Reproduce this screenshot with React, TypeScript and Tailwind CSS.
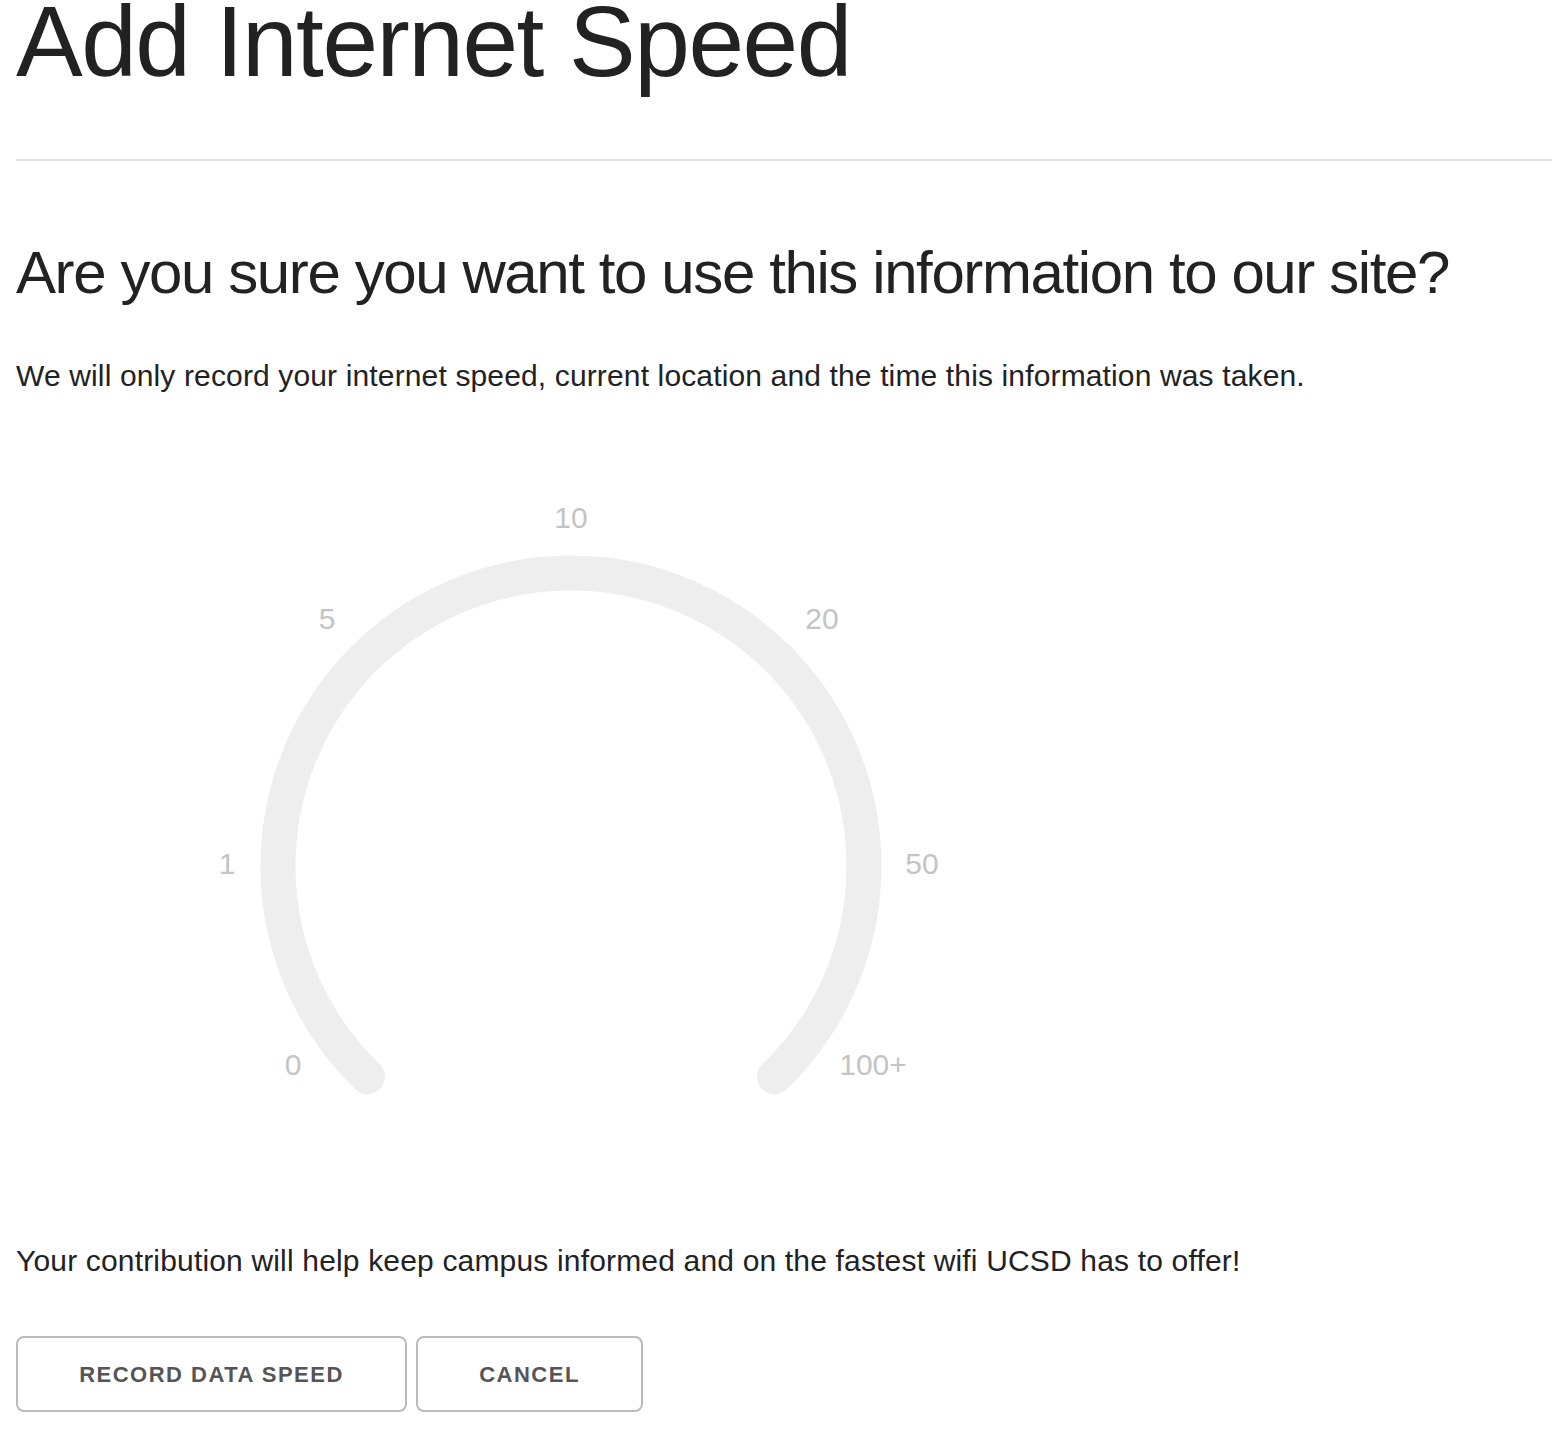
import React from 'react';

const labels: { text: string; x: number; y: number }[] = [
  { text: '0', x: 293, y: 1075 },
  { text: '1', x: 227, y: 874 },
  { text: '5', x: 327, y: 629 },
  { text: '10', x: 571, y: 528 },
  { text: '20', x: 822, y: 629 },
  { text: '50', x: 922, y: 874 },
  { text: '100+', x: 873, y: 1075 },
];

const SpeedGauge: React.FC = () => {
  // arc centre (571, 866), radius 293, sweeping a bit over 270deg
  const cx = 571;
  const cy = 866;
  const r = 293;
  const a = (46 * Math.PI) / 180;
  const dx = r * Math.cos(a);
  const dy = r * Math.sin(a);
  const arc = `M ${cx - dx} ${cy + dy} A ${r} ${r} 0 1 1 ${cx + dx} ${cy + dy}`;

  return (
    <svg width="960" height="837" viewBox="16 400 960 837" className="block">
      <path d={arc} fill="none" stroke="#eeeeee" strokeWidth="35" strokeLinecap="round" />
      {labels.map(l => (
        <text
          key={l.text}
          x={l.x}
          y={l.y}
          textAnchor="middle"
          fill="#c4c4c4"
          fontSize="30"
          fontFamily="'Liberation Sans', Arial, sans-serif"
        >
          {l.text}
        </text>
      ))}
    </svg>
  );
};

const App: React.FC = () => {
  return (
    <div className="min-h-[1448px] bg-white pl-4 font-['Liberation_Sans',Arial,sans-serif] text-[#222] overflow-hidden">
      <h1 className="-mt-[19px] text-[100px] leading-[120px] tracking-[-1.5px] font-normal">Add Internet Speed</h1>

      <hr className="mt-[58px] border-0 border-t-2 border-[#e1e1e1]" />

      <h3 className="mt-[73px] text-[60px] leading-[78px] tracking-[-1.4px] font-normal">
        Are you sure you want to use this information to our site?
      </h3>

      <p className="mt-[40px] text-[30px] leading-[48px] tracking-[0.14px]">
        We will only record your internet speed, current location and the time this information was taken.
      </p>

      <SpeedGauge />

      <p className="text-[30px] leading-[48px] tracking-[0.17px]">
        Your contribution will help keep campus informed and on the fastest wifi UCSD has to offer!
      </p>

      <div className="mt-[51px] flex gap-[9px]">
        <button className="w-[391px] h-[76px] flex items-center justify-center rounded-[8px] border-2 border-[#bbb] bg-transparent text-[22px] font-bold uppercase tracking-[1.5px] text-[#555]">
          Record Data Speed
        </button>
        <button className="w-[227px] h-[76px] flex items-center justify-center rounded-[8px] border-2 border-[#bbb] bg-transparent text-[22px] font-bold uppercase tracking-[1.5px] text-[#555]">
          Cancel
        </button>
      </div>
    </div>
  );
};

export default App;
